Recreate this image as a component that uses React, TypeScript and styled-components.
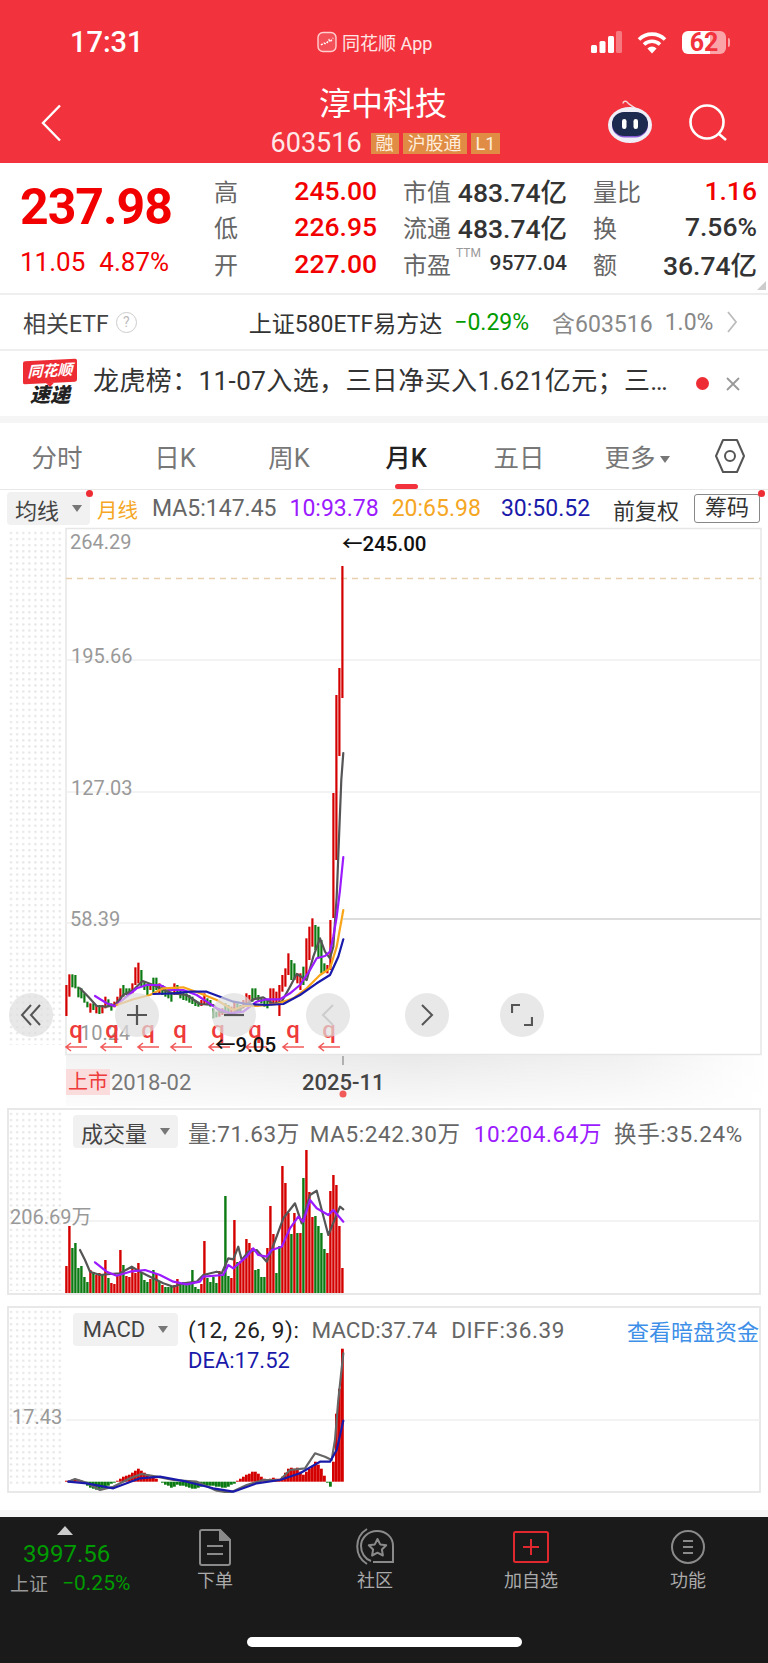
import React from 'react';
import styled, { createGlobalStyle } from 'styled-components';

const FONT = `Roboto, "Noto Sans CJK SC", sans-serif`;
const RED = '#f2323c';
const UP = '#d40000';
const DOWN = '#0c7a12';

const GlobalStyle = createGlobalStyle`
  html, body { margin: 0; padding: 0; background: #fff; }
  body { font-family: ${FONT}; width: 768px; overflow-x: hidden; }
`;

const Page = styled.div`
  width: 768px;
  height: 1663px;
  display: flex;
  flex-direction: column;
  overflow: hidden;
`;

/* 顶部红色区域 */
const Header = styled.header`
  height: 163px;
  background: ${RED};
  color: #fff;
  display: flex;
  flex-direction: column;
`;
const StatusBar = styled.div`
  height: 64px;
  padding: 20px 42px 0 70px;
  box-sizing: border-box;
  display: grid;
  grid-template-columns: 247px 1fr auto;
  align-items: center;
`;
const Clock = styled.div`
  font-size: 29px;
  font-weight: 500;
`;
const AppName = styled.div`
  display: flex;
  align-items: center;
  gap: 5px;
  font-size: 18px;
  color: #ffe6e6;
`;
const StatusIcons = styled.div`
  display: flex;
  align-items: center;
  gap: 15px;
`;
const Battery = styled.div`
  position: relative;
  width: 44px;
  height: 23px;
  border-radius: 6px;
  background: linear-gradient(90deg, #fff 0 64%, #fba4a8 64% 100%);
  color: ${RED};
  font-size: 25px;
  font-weight: 700;
  line-height: 23px;
  text-align: center;
  &::after {
    content: '';
    position: absolute;
    right: -4px;
    top: 7px;
    width: 2px;
    height: 9px;
    border-radius: 0 2px 2px 0;
    background: #fba4a8;
  }
`;
const NavRow = styled.div`
  flex: 1;
  display: grid;
  grid-template-columns: 230px 306px 232px;
  align-items: start;
`;
const BackCell = styled.div`
  padding: 40px 0 0 40px;
  display: flex;
`;
const TitleCell = styled.div`
  padding-top: 18px;
  display: flex;
  flex-direction: column;
  align-items: center;
  gap: 4px;
`;
const Title = styled.div`
  font-size: 32px;
  line-height: 44px;
`;
const CodeRow = styled.div`
  display: flex;
  align-items: center;
  gap: 4px;
  height: 26px;
  padding-left: 5px;
`;
const Code = styled.span`
  font-size: 27px;
  margin-right: 5px;
  color: #ffe8e8;
`;
const Tag = styled.span`
  background: #e08c45;
  color: #ffeedd;
  font-size: 18px;
  line-height: 21px;
  padding: 0 5px;
`;
const NavIcons = styled.div`
  display: flex;
  align-items: center;
  gap: 36px;
  padding: 36px 0 0 71px;
`;

/* 行情 */
const Quote = styled.section`
  position: relative;
  height: 132px;
  box-sizing: border-box;
  display: flex;
  padding-top: 9px;
  border-bottom: 2px solid #eee;
`;
const PriceBlock = styled.div`
  width: 214px;
  padding-left: 20px;
  box-sizing: border-box;
  color: #f20000;
`;
const Price = styled.div`
  font-size: 50px;
  font-weight: 700;
  line-height: 60px;
  margin-top: 5px;
  letter-spacing: -1px;
`;
const Change = styled.div`
  display: flex;
  gap: 14px;
  font-size: 26px;
  line-height: 30px;
  margin-top: 10px;
`;
const Stats = styled.div`
  display: grid;
  grid-template-columns: 163px 164px 164px;
  column-gap: 26px;
  grid-auto-rows: 36.5px;
`;
const Stat = styled.div`
  display: flex;
  justify-content: space-between;
  align-items: center;
`;
const StatLabel = styled.span`
  font-size: 24px;
  color: #666;
  position: relative;
`;
const Ttm = styled.sup`
  position: absolute;
  left: 53px;
  top: 1px;
  font-size: 12px;
  line-height: 12px;
  color: #999;
`;
const StatValue = styled.span<{ $red?: boolean; $small?: boolean }>`
  font-size: ${p => (p.$small ? '21px' : '26.5px')};
  font-weight: 500;
  color: ${p => (p.$red ? '#f20000' : '#333')};
`;
const Corner = styled.div`
  position: absolute;
  right: 2px;
  bottom: 3px;
  width: 0;
  height: 0;
  border-left: 9px solid transparent;
  border-bottom: 9px solid #ccc;
`;

const EtfRow = styled.div`
  height: 56px;
  box-sizing: border-box;
  border-bottom: 2px solid #eee;
  display: flex;
  align-items: center;
  padding-left: 23px;
  font-size: 23px;
  color: #444;
`;
const EtfHelp = styled.span`
  width: 19px;
  height: 19px;
  border: 1.5px solid #ccc;
  border-radius: 50%;
  color: #bbb;
  font-size: 14px;
  line-height: 19px;
  text-align: center;
  margin-left: 7px;
  margin-right: 112px;
`;
const EtfName = styled.span`
  color: #333;
  margin-right: 12px;
  white-space: nowrap;
`;
const EtfGreen = styled.span`
  color: #009b00;
  margin-right: 23px;
`;
const EtfGray = styled.span`
  color: #888;
  margin-right: 12px;
  white-space: nowrap;
`;

const NewsRow = styled.div`
  height: 65px;
  display: flex;
  align-items: center;
  padding-left: 23px;
  border-bottom: 7px solid #f5f5f5;
`;
const NewsLogo = styled.div`
  width: 54px;
  display: flex;
  flex-direction: column;
  align-items: center;
  margin-right: 16px;
`;
const NewsLogoTop = styled.div`
  position: relative;
  width: 54px;
  height: 23px;
  background: #ee2c34;
  border-radius: 2px;
  color: #fff;
  font-size: 15px;
  font-style: italic;
  font-weight: 700;
  line-height: 23px;
  text-align: center;
  white-space: nowrap;
  transform: skewY(-3deg);
  &::after {
    content: '';
    position: absolute;
    left: 23px;
    bottom: -4px;
    width: 0;
    height: 0;
    border-left: 4px solid transparent;
    border-right: 4px solid transparent;
    border-top: 4px solid #ee2c34;
  }
`;
const NewsLogoBottom = styled.div`
  font-size: 20px;
  font-weight: 900;
  font-style: italic;
  line-height: 24px;
  color: #222;
`;
const NewsText = styled.div`
  width: 585px;
  font-size: 26px;
  letter-spacing: 0.4px;
  line-height: 32px;
  margin-bottom: 5px;
  color: #333;
  white-space: nowrap;
`;
const NewsDot = styled.span`
  width: 13px;
  height: 13px;
  border-radius: 50%;
  background: #ee2c34;
  margin-left: 18px;
  margin-right: 16px;
`;

/* 周期 */
const Tabs = styled.nav`
  height: 67px;
  box-sizing: border-box;
  display: grid;
  grid-template-columns: 114px 122px 106px 128px 98px 138px 48px;
  align-items: center;
  border-bottom: 1.5px solid #e8e8e8;
`;
const Tab = styled.div<{ $active?: boolean }>`
  position: relative;
  text-align: center;
  font-size: 25.5px;
  padding-top: 4px;
  line-height: 61px;
  font-weight: ${p => (p.$active ? 500 : 400)};
  color: ${p => (p.$active ? '#222' : '#777')};
  &::after {
    content: '';
    display: ${p => (p.$active ? 'block' : 'none')};
    position: absolute;
    left: 50%;
    bottom: 0;
    width: 23px;
    height: 5px;
    margin-left: -11px;
    border-radius: 3px;
    background: ${RED};
  }
`;
const Caret = styled.span`
  display: inline-block;
  width: 0;
  height: 0;
  margin-left: 4px;
  vertical-align: middle;
  border-left: 5.5px solid transparent;
  border-right: 5.5px solid transparent;
  border-top: 7px solid #777;
`;
const HexCell = styled.div`
  display: flex;
  justify-content: center;
`;

const MaRow = styled.div`
  position: relative;
  height: 37px;
  display: flex;
  align-items: center;
  padding-left: 7px;
  font-size: 23px;
  white-space: nowrap;
`;
const Selector = styled.div<{ $w: number }>`
  width: ${p => p.$w}px;
  height: 33px;
  box-sizing: border-box;
  background: #f1f1f1;
  border-radius: 4px;
  display: flex;
  align-items: center;
  justify-content: center;
  gap: 9px;
  color: #444;
  font-size: 22px;
  letter-spacing: 0;
`;
const MaLabel = styled.span`
  margin: 0 14px 0 7px;
  font-size: 20.5px;
  color: #f5a623;
`;
const MaText = styled.span<{ $c: string; $mr: number }>`
  color: ${p => p.$c};
  margin-right: ${p => p.$mr}px;
`;
const AdjustText = styled.span`
  width: 66px;
  margin-right: 15px;
  font-size: 22px;
  color: #333;
`;
const ChipButton = styled.div`
  width: 66px;
  height: 29px;
  box-sizing: border-box;
  border: 1.5px solid #888;
  border-radius: 3px;
  font-size: 22px;
  text-align: center;
  line-height: 26px;
  color: #333;
`;
const RedDot = styled.span<{ $x: number }>`
  position: absolute;
  left: ${p => p.$x}px;
  top: 0;
  width: 7px;
  height: 7px;
  border-radius: 50%;
  background: #ee2c34;
`;

/* 主图 */
const MainChart = styled.section`
  position: relative;
  height: 581px;
`;
const ChartSvg = styled.svg`
  display: block;
  font-family: ${FONT};
`;
const ZoomBar = styled.div`
  position: absolute;
  left: 9px;
  top: 466px;
  display: grid;
  grid-template-columns: 106px 97px 94px 99px 95px 44px;
`;
const ZoomButton = styled.div`
  width: 44px;
  height: 44px;
  border-radius: 50%;
  background: rgba(222, 222, 222, 0.7);
  display: flex;
  align-items: center;
  justify-content: center;
`;

/* 副图 */
const SubPanel = styled.section<{ $h: number; $mt: number }>`
  position: relative;
  height: ${p => p.$h}px;
  margin: ${p => p.$mt}px 7px 0;
`;
const PanelHead = styled.div`
  position: absolute;
  left: 66px;
  top: 7px;
  right: 0;
  display: flex;
  align-items: center;
  font-size: 22.5px;
  letter-spacing: 0.6px;
  white-space: nowrap;
`;
const HeadText = styled.span<{ $c: string; $ml: number; $tight?: boolean }>`
  color: ${p => p.$c};
  margin-left: ${p => p.$ml}px;
  letter-spacing: ${p => (p.$tight ? '0' : 'inherit')};
`;
const DarkPoolLink = styled.span`
  margin-left: 62px;
  font-size: 22px;
  letter-spacing: 0;
  color: #3d8fe8;
`;
const DeaText = styled.div`
  position: absolute;
  left: 181px;
  top: 42px;
  font-size: 22px;
  color: #1a1aaa;
`;

/* 底栏 */
const Spacer = styled.div`
  height: 24px;
  background: linear-gradient(#fff 0 17px, #f4f4f4 17px);
`;
const Footer = styled.footer`
  position: relative;
  flex: 1;
  background: #1a1a1a;
  display: grid;
  grid-template-columns: 137px 156px 164px 148px 166px;
  align-content: start;
`;
const IndexBlock = styled.div`
  padding: 9px 0 0 10px;
  display: flex;
  flex-direction: column;
`;
const IndexUp = styled.span`
  align-self: flex-start;
  margin-left: 47px;
  width: 0;
  height: 0;
  border-left: 8px solid transparent;
  border-right: 8px solid transparent;
  border-bottom: 9px solid #ccc;
`;
const IndexValue = styled.span`
  margin: 5px 0 0 13px;
  font-size: 24px;
  line-height: 29px;
  color: #009b00;
`;
const IndexRow = styled.div`
  display: flex;
  align-items: center;
  gap: 14px;
  font-size: 19px;
  color: #999;
`;
const IndexPct = styled.span`
  font-size: 21px;
  color: #009b00;
`;
const FootItem = styled.div`
  display: flex;
  flex-direction: column;
  align-items: center;
  padding-top: 10px;
  color: #aaa;
  font-size: 18px;
  line-height: 26px;
`;
const FootIcon = styled.div`
  height: 40px;
  margin-bottom: 1px;
  display: flex;
  align-items: center;
`;
const HomeBar = styled.div`
  position: absolute;
  left: 247px;
  top: 120px;
  width: 275px;
  height: 10px;
  border-radius: 5px;
  background: #fff;
`;

// 月线数据 [最高, 最低, 是否阳线]，坐标取自放大图
type Candle = [number, number, 0 | 1];
const candles: Candle[] = [
  [315, 408, 1], [283, 350, 1], [283, 322, 0], [285, 325, 0], [320, 352, 0], [325, 355, 0], [340, 368, 0], [365, 382, 0],
  [370, 398, 1], [370, 390, 0], [375, 400, 1], [375, 402, 0], [375, 400, 1], [350, 385, 1], [358, 380, 0], [370, 392, 0],
  [365, 382, 1], [350, 378, 1], [325, 365, 1], [315, 350, 0], [325, 345, 0], [325, 345, 0], [310, 340, 1], [262, 315, 1],
  [248, 310, 1], [270, 320, 0], [305, 330, 0], [315, 345, 0], [310, 330, 1], [293, 340, 0], [293, 330, 0], [310, 340, 1],
  [315, 345, 0], [325, 350, 0], [330, 355, 0], [340, 365, 0], [310, 345, 1], [315, 345, 0], [330, 355, 0], [335, 360, 0],
  [340, 362, 0], [345, 368, 0], [350, 372, 0], [360, 378, 0], [365, 380, 0], [360, 378, 1], [340, 375, 1], [355, 375, 0],
  [360, 380, 0], [385, 415, 0], [395, 412, 0], [395, 410, 1], [385, 405, 1], [370, 395, 0], [375, 400, 0], [380, 400, 1],
  [365, 395, 1], [370, 395, 0], [375, 395, 0], [360, 385, 1], [340, 370, 1], [345, 375, 1], [325, 365, 0], [325, 360, 0],
  [345, 365, 0], [355, 370, 0], [360, 380, 0], [360, 385, 0], [325, 375, 1], [325, 370, 1], [335, 375, 1], [315, 408, 1],
  [285, 335, 1], [265, 320, 1], [220, 285, 1], [240, 300, 0], [250, 300, 0], [280, 310, 1], [280, 330, 1], [260, 315, 0],
  [175, 290, 1], [140, 240, 1], [115, 200, 1], [135, 210, 0], [140, 235, 0], [180, 280, 0], [250, 275, 0], [255, 280, 1],
  [120, 270, 1], [-261, 114, 1], [-555, -60, 1], [-636, -372, 1], [-942, -546, 1],
];

type Bar = [number, 0 | 1];
const volumes: Bar[] = [
  [27, 1], [67, 1], [45, 0], [50, 0], [25, 0], [27, 0], [16, 0], [11, 0], [23, 1], [21, 0], [18, 1], [20, 1], [18, 0], [33, 1], [15, 0], [10, 1],
  [9, 1], [17, 1], [43, 1], [28, 0], [17, 1], [16, 1], [25, 1], [20, 1], [30, 1], [20, 0], [13, 0], [11, 0], [14, 1], [23, 0], [19, 1], [11, 0],
  [8, 1], [6, 0], [6, 0], [7, 0], [8, 1], [14, 1], [9, 0], [11, 0], [10, 0], [9, 0], [23, 0], [6, 0], [4, 0], [9, 1], [52, 1], [15, 0],
  [11, 0], [16, 0], [10, 0], [22, 1], [17, 0], [97, 0], [17, 0], [15, 1], [73, 1], [31, 0], [32, 1], [35, 1], [54, 1], [50, 1], [45, 1], [23, 0],
  [24, 0], [16, 0], [16, 0], [45, 1], [87, 1], [59, 1], [20, 0], [47, 0], [127, 1], [110, 1], [80, 1], [59, 0], [80, 1], [60, 0], [60, 1], [115, 0],
  [143, 1], [101, 1], [76, 1], [77, 0], [67, 0], [60, 0], [44, 0], [40, 1], [102, 1], [118, 1], [108, 1], [67, 1], [25, 1],
];

const macd = [
  1, 1, 2, 2, 2, 1,
  -2, -4, -6, -7, -8, -8, -7, -6, -4, -2, -1,
  1, 3, 5, 6, 7, 9, 11, 13, 11, 9, 7, 5, 4, 3,
  0, -1, -3, -4, -6, -5, -3, -4, -4, -5, -6, -7, -7, -6, -5, -5, -4, -4, -4, -5, -5, -6, -6, -5, -3, -2,
  1, 3, 5, 7, 8, 10, 10, 8, 5, 3, 2, 3, 4, 3, 3, 5, 9, 13, 14, 13, 14, 10, 7, 10, 13, 15, 20, 17, 13, 6,
  -1, -5, 20, 68, 93, 133,
];

const barX = (i: number) => 66.4 + i * 3;

// 放大图坐标 -> 页面坐标
const toPoints = (pts: number[], top: number) => {
  const out: string[] = [];
  for (let i = 0; i < pts.length; i += 2) out.push(`${(pts[i] / 3).toFixed(1)},${(top + pts[i + 1] / 3).toFixed(1)}`);
  return out.join(' ');
};

const maGray = [240, 325, 265, 350, 290, 378, 320, 380, 345, 375, 370, 345, 400, 330, 428, 303, 460, 315, 490, 330, 520, 340, 560, 345, 600, 372, 640, 375, 660, 395, 700, 400, 730, 380, 760, 358, 790, 352, 820, 372, 845, 365, 870, 320, 890, 282, 920, 300, 940, 230, 960, 175, 975, 215, 990, 235, 1000, 200, 1010, 50, 1018, -150, 1024, -300, 1030, -381];
const maPurple = [285, 348, 320, 370, 345, 378, 380, 350, 410, 325, 440, 315, 480, 315, 510, 330, 550, 330, 590, 345, 620, 365, 650, 385, 690, 400, 730, 395, 770, 365, 800, 358, 840, 358, 870, 340, 900, 315, 930, 270, 950, 235, 975, 228, 990, 215, 1000, 170, 1010, 110, 1020, 30, 1030, -69];
const maOrange = [350, 375, 400, 358, 450, 345, 490, 325, 550, 322, 600, 340, 650, 360, 700, 390, 730, 378, 770, 378, 830, 372, 880, 355, 920, 325, 960, 285, 990, 265, 1010, 200, 1030, 90];
const maBlue = [460, 342, 520, 340, 570, 335, 620, 335, 660, 350, 700, 365, 740, 372, 800, 375, 850, 372, 900, 345, 950, 310, 990, 285, 1015, 230, 1030, 178];

const volGray = [240, 450, 255, 480, 270, 515, 300, 525, 330, 522, 360, 520, 395, 500, 420, 515, 450, 530, 490, 550, 520, 560, 550, 550, 590, 545, 610, 525, 650, 515, 665, 520, 685, 475, 700, 478, 715, 440, 725, 480, 745, 455, 770, 450, 800, 485, 815, 450, 850, 355, 885, 310, 905, 370, 930, 285, 950, 272, 985, 405, 1020, 320, 1030, 328];
const volPurple = [285, 487, 320, 515, 350, 527, 390, 515, 435, 510, 480, 525, 520, 545, 560, 553, 600, 545, 610, 530, 670, 525, 685, 495, 700, 505, 740, 470, 760, 445, 775, 465, 800, 470, 815, 450, 845, 440, 870, 385, 895, 350, 910, 365, 930, 300, 950, 325, 985, 345, 1000, 330, 1030, 365];

const macdGray = [205, 545, 225, 537, 260, 548, 300, 570, 340, 560, 390, 535, 425, 522, 470, 530, 520, 540, 590, 545, 650, 572, 690, 578, 740, 555, 790, 540, 840, 540, 870, 510, 915, 505, 945, 460, 975, 470, 995, 480, 1005, 420, 1015, 300, 1030, 160];
const macdBlue = [205, 545, 260, 550, 340, 565, 420, 535, 480, 530, 560, 545, 640, 565, 700, 575, 770, 550, 840, 540, 900, 520, 960, 485, 990, 485, 1010, 450, 1030, 362];

const markerX = [76, 112, 148, 180, 218, 255, 293, 329];
const arrowX = [65, 100, 137, 170, 208, 245, 282, 318];

const DotField = ({ id, y, h }: { id: string; y: number; h: number }) => (
  <>
    <defs>
      <pattern id={id} width="6.1" height="6.1" patternUnits="userSpaceOnUse" x="8" y={y}>
        <circle cx="3" cy="3" r="1.2" fill="#e6e6e6" />
      </pattern>
    </defs>
    <rect x="8" y={y} width="56" height={h} fill={`url(#${id})`} />
  </>
);

const Line = ({ pts, top, c, w = 2.2 }: { pts: number[]; top: number; c: string; w?: number }) => (
  <polyline points={toPoints(pts, top)} fill="none" stroke={c} strokeWidth={w} strokeLinejoin="round" strokeLinecap="round" />
);

export default function App() {
  return (
    <Page>
      <GlobalStyle />
      <Header>
        <StatusBar>
          <Clock>17:31</Clock>
          <AppName>
            <svg width="20" height="22" viewBox="0 0 20 22">
              <rect x="1" y="1.5" width="18" height="19" rx="5" fill="#fff" fillOpacity=".15" stroke="#ffd0d0" strokeWidth="1.4" />
              <path d="M4 14l3-2 2 1 3-4 1 2 3-4" fill="none" stroke="#fff" strokeWidth="1.5" strokeDasharray="2 1.5" />
            </svg>
            同花顺 App
          </AppName>
          <StatusIcons>
            <svg width="31" height="22" viewBox="0 0 31 22">
              <rect x="0" y="14" width="6" height="8" rx="1.5" fill="#fff" />
              <rect x="8.500" y="10" width="6" height="12" rx="1.5" fill="#fff" />
              <rect x="17" y="5" width="6" height="17" rx="1.5" fill="#fff" />
              <rect x="25" y="0" width="6" height="22" rx="1.5" fill="#fff" fillOpacity=".35" />
            </svg>
            <svg width="30" height="23" viewBox="0 0 30 23" fill="none" stroke="#fff" strokeWidth="3.6">
              <path d="M2 8.5a18.5 18.5 0 0 1 26 0" />
              <path d="M7 13.5a11.5 11.5 0 0 1 16 0" />
              <path d="M15 22.5l-4.6-5a6.5 6.5 0 0 1 9.2 0z" fill="#fff" stroke="none" />
            </svg>
            <Battery>62</Battery>
          </StatusIcons>
        </StatusBar>
        <NavRow>
          <BackCell>
            <svg width="22" height="38" viewBox="0 0 22 38" fill="none" stroke="#fff" strokeWidth="2.4">
              <path d="M20 1.5L3 19l17 17.5" />
            </svg>
          </BackCell>
          <TitleCell>
            <Title>淳中科技</Title>
            <CodeRow>
              <Code>603516</Code>
              <Tag>融</Tag>
              <Tag>沪股通</Tag>
              <Tag>L1</Tag>
            </CodeRow>
          </TitleCell>
          <NavIcons>
            <svg width="46" height="44" viewBox="0 0 46 44">
              <path d="M16 3.500c0-2.500 3.500-3 4.500-1 .8 1.600 4 3 8 6" fill="none" stroke="#f6d5d9" strokeWidth="1.500" />
              <ellipse cx="23" cy="25" rx="22" ry="18" fill="#f0eff8" />
              <rect x="5" y="12.500" width="36" height="25" rx="12.500" fill="#8a5bd6" />
              <rect x="5" y="12" width="36" height="24" rx="12" fill="#1d2a4f" />
              <rect x="15" y="19" width="4.500" height="10" rx="2.200" fill="#fff" />
              <rect x="26.500" y="19" width="4.500" height="10" rx="2.200" fill="#fff" />
            </svg>
            <svg width="39" height="37" viewBox="0 0 39 37" fill="none" stroke="#fff" strokeWidth="2.6">
              <circle cx="18" cy="18" r="16.500" />
              <path d="M30 30l7 6" />
            </svg>
          </NavIcons>
        </NavRow>
      </Header>

      <Quote>
        <PriceBlock>
          <Price>237.98</Price>
          <Change>
            <span>11.05</span>
            <span>4.87%</span>
          </Change>
        </PriceBlock>
        <Stats>
          <Stat><StatLabel>高</StatLabel><StatValue $red>245.00</StatValue></Stat>
          <Stat><StatLabel>市值</StatLabel><StatValue>483.74亿</StatValue></Stat>
          <Stat><StatLabel>量比</StatLabel><StatValue $red>1.16</StatValue></Stat>
          <Stat><StatLabel>低</StatLabel><StatValue $red>226.95</StatValue></Stat>
          <Stat><StatLabel>流通</StatLabel><StatValue>483.74亿</StatValue></Stat>
          <Stat><StatLabel>换</StatLabel><StatValue>7.56%</StatValue></Stat>
          <Stat><StatLabel>开</StatLabel><StatValue $red>227.00</StatValue></Stat>
          <Stat><StatLabel>市盈<Ttm>TTM</Ttm></StatLabel><StatValue $small>9577.04</StatValue></Stat>
          <Stat><StatLabel>额</StatLabel><StatValue>36.74亿</StatValue></Stat>
        </Stats>
        <Corner />
      </Quote>

      <EtfRow>
        相关ETF
        <EtfHelp>?</EtfHelp>
        <EtfName>上证580ETF易方达</EtfName>
        <EtfGreen>−0.29%</EtfGreen>
        <EtfGray>含603516</EtfGray>
        <EtfGray>1.0%</EtfGray>
        <svg width="14" height="24" viewBox="0 0 14 24" fill="none" stroke="#bbb" strokeWidth="1.8">
          <path d="M3 2l8 10-8 10" />
        </svg>
      </EtfRow>

      <NewsRow>
        <NewsLogo>
          <NewsLogoTop>同花顺</NewsLogoTop>
          <NewsLogoBottom>速递</NewsLogoBottom>
        </NewsLogo>
        <NewsText>龙虎榜：11-07入选，三日净买入1.621亿元；三…</NewsText>
        <NewsDot />
        <svg width="16" height="16" viewBox="0 0 16 16" stroke="#999" strokeWidth="1.8">
          <path d="M2 2l12 12M14 2L2 14" />
        </svg>
      </NewsRow>

      <Tabs>
        <Tab>分时</Tab>
        <Tab>日K</Tab>
        <Tab>周K</Tab>
        <Tab $active>月K</Tab>
        <Tab>五日</Tab>
        <Tab>更多<Caret /></Tab>
        <HexCell>
          <svg width="32" height="36" viewBox="0 0 32 36" fill="none" stroke="#555" strokeWidth="2">
            <path d="M9 2h14l7 16-7 16H9L2 18z" strokeLinejoin="round" />
            <circle cx="16" cy="18" r="5" />
          </svg>
        </HexCell>
      </Tabs>

      <MaRow>
        <Selector $w={83}>均线<Caret /></Selector>
        <RedDot $x={86} />
        <MaLabel>月线</MaLabel>
        <MaText $c="#666" $mr={13}>MA5:147.45</MaText>
        <MaText $c="#9b1aff" $mr={13}>10:93.78</MaText>
        <MaText $c="#f5a623" $mr={20}>20:65.98</MaText>
        <MaText $c="#1a1aaa" $mr={23}>30:50.52</MaText>
        <AdjustText>前复权</AdjustText>
        <ChipButton>筹码</ChipButton>
        <RedDot $x={758} />
      </MaRow>

      <MainChart>
        <ChartSvg width="768" height="581" viewBox="0 527 768 581">
          <defs>
            <linearGradient id="dateShade" x1="0" x2="1" y1="0" y2="0">
              <stop offset="0" stopColor="#f3f3f3" />
              <stop offset="0.5" stopColor="#e9e9e9" />
              <stop offset="0.8" stopColor="#f1f1f1" />
              <stop offset="1" stopColor="#ffffff" />
            </linearGradient>
            <linearGradient id="dateFade" x1="0" x2="0" y1="0" y2="1">
              <stop offset="0" stopColor="#ffffff" stopOpacity="0" />
              <stop offset="1" stopColor="#ffffff" stopOpacity="0.75" />
            </linearGradient>
          </defs>
          <DotField id="mainDots" y={530} h={515} />
          <rect x="66" y="1055" width="702" height="51" fill="url(#dateShade)" />
          <rect x="66" y="1055" width="702" height="51" fill="url(#dateFade)" />
          <rect x="66" y="528.5" width="695" height="526" fill="#fff" stroke="#e6e6e6" strokeWidth="1.5" />
          <line x1="66" x2="761" y1="660" y2="660" stroke="#efefef" strokeWidth="1.5" />
          <line x1="66" x2="761" y1="792" y2="792" stroke="#efefef" strokeWidth="1.5" />
          <line x1="66" x2="343" y1="923" y2="923" stroke="#efefef" strokeWidth="1.5" />
          <line x1="343" x2="761" y1="919" y2="919" stroke="#ddd" strokeWidth="2" />
          <line x1="66" x2="761" y1="578.5" y2="578.5" stroke="#e8cfae" strokeWidth="1.5" strokeDasharray="6 5" />

          <g fontSize="20" fill="#999" dominantBaseline="central">
            <text x="70" y="542">264.29</text>
            <text x="71" y="656">195.66</text>
            <text x="71" y="788">127.03</text>
            <text x="70" y="919">58.39</text>
            <text x="80" y="1033">10.24</text>
          </g>

          {candles.map(([hi, lo, up], i) => (
            <rect
              key={i}
              x={barX(i) - 1.1}
              y={880 + hi / 3}
              width="2.2"
              height={(lo - hi) / 3}
              fill={up ? UP : DOWN}
            />
          ))}
          <Line pts={maGray} top={880} c="#555" />
          <Line pts={maPurple} top={880} c="#9b1aff" />
          <Line pts={maOrange} top={880} c="#f9a51a" />
          <Line pts={maBlue} top={880} c="#1a1aaa" />

          <text x="342" y="544" fontSize="20.5" fontWeight="500" fill="#111" dominantBaseline="central">←245.00</text>

          <g fontSize="24" fill="#ee3a3a" fontWeight="500" textAnchor="middle" dominantBaseline="central">
            {markerX.map(x => <text key={x} x={x} y="1030">q</text>)}
          </g>
          <g stroke="#f25a5a" strokeWidth="1.6" fill="none">
            {arrowX.map(x => <path key={x} d={`M${x + 22} 1047H${x + 1}M${x + 6} 1043l-5 4 5 4`} />)}
          </g>
          <text x="215" y="1045" fontSize="20.5" fontWeight="500" fill="#111" dominantBaseline="central">←9.05</text>

          <rect x="66" y="1069" width="44" height="26" fill="#fbdcdc" />
          <text x="88" y="1082" fontSize="20" fill="#ee3a3a" textAnchor="middle" dominantBaseline="central">上市</text>
          <text x="111" y="1082" fontSize="22" fill="#777" dominantBaseline="central">2018-02</text>
          <line x1="343" x2="343" y1="1056" y2="1065" stroke="#888" strokeWidth="1.2" />
          <text x="302" y="1082" fontSize="22" fontWeight="500" fill="#444" dominantBaseline="central">2025-11</text>
          <circle cx="343" cy="1094" r="3.5" fill="#f25a5a" />
        </ChartSvg>
        <ZoomBar>
          <ZoomButton>
            <svg width="22" height="22" viewBox="0 0 22 22" fill="none" stroke="#555" strokeWidth="2">
              <path d="M11 1L2 11l9 10M20 1l-9 10 9 10" />
            </svg>
          </ZoomButton>
          <ZoomButton>
            <svg width="22" height="22" viewBox="0 0 22 22" stroke="#555" strokeWidth="2.2">
              <path d="M1 11h20M11 1v20" />
            </svg>
          </ZoomButton>
          <ZoomButton>
            <svg width="22" height="4" viewBox="0 0 22 4" stroke="#555" strokeWidth="2.2">
              <path d="M1 2h20" />
            </svg>
          </ZoomButton>
          <ZoomButton>
            <svg width="14" height="24" viewBox="0 0 14 24" fill="none" stroke="#ccc" strokeWidth="2">
              <path d="M12 2L2 12l10 10" />
            </svg>
          </ZoomButton>
          <ZoomButton>
            <svg width="14" height="24" viewBox="0 0 14 24" fill="none" stroke="#555" strokeWidth="2">
              <path d="M2 2l10 10L2 22" />
            </svg>
          </ZoomButton>
          <ZoomButton>
            <svg width="22" height="22" viewBox="0 0 22 22" fill="none" stroke="#555" strokeWidth="2.2">
              <path d="M1 9V1h8M21 13v8h-8" />
            </svg>
          </ZoomButton>
        </ZoomBar>
      </MainChart>

      <SubPanel $h={187} $mt={0}>
        <ChartSvg width="754" height="187" viewBox="7 1108 754 187">
          <rect x="8" y="1109" width="752" height="185" fill="#fff" stroke="#e6e6e6" strokeWidth="1.8" />
          <DotField id="volDots" y={1111} h={180} />
          <line x1="66" x2="760" y1="1221" y2="1221" stroke="#efefef" strokeWidth="1.5" />
          <text x="10" y="1217" fontSize="20" fill="#999" dominantBaseline="central">206.69万</text>
          {volumes.map(([h, up], i) => (
            <rect key={i} x={barX(i) - 1.2} y={1293 - h} width="2.4" height={h} fill={up ? UP : DOWN} />
          ))}
          <Line pts={volGray} top={1100} c="#555" />
          <Line pts={volPurple} top={1100} c="#9b1aff" />
        </ChartSvg>
        <PanelHead>
          <Selector $w={105}>成交量<Caret /></Selector>
          <HeadText $c="#666" $ml={10}>量:71.63万</HeadText>
          <HeadText $c="#666" $ml={10}>MA5:242.30万</HeadText>
          <HeadText $c="#9b1aff" $ml={13}>10:204.64万</HeadText>
          <HeadText $c="#666" $ml={12}>换手:35.24%</HeadText>
        </PanelHead>
      </SubPanel>

      <SubPanel $h={187} $mt={11}>
        <ChartSvg width="754" height="187" viewBox="7 1306 754 187">
          <rect x="8" y="1307" width="752" height="185" fill="#fff" stroke="#e6e6e6" strokeWidth="1.8" />
          <DotField id="macdDots" y={1309} h={176} />
          <line x1="66" x2="760" y1="1420" y2="1420" stroke="#efefef" strokeWidth="1.5" />
          <text x="12" y="1417" fontSize="20" fill="#999" dominantBaseline="central">17.43</text>
          {macd.map((v, i) => (
            <rect
              key={i}
              x={barX(i) - 1.4}
              y={v > 0 ? 1481.7 - v : 1481.7}
              width="2.8"
              height={Math.abs(v)}
              fill={v > 0 ? UP : DOWN}
            />
          ))}
          <Line pts={macdGray} top={1300} c="#666" />
          <Line pts={macdBlue} top={1300} c="#1a1aaa" />
        </ChartSvg>
        <PanelHead>
          <Selector $w={105}>MACD<Caret /></Selector>
          <HeadText $c="#222" $ml={10}>(12, 26, 9):</HeadText>
          <HeadText $c="#666" $ml={12} $tight>MACD:37.74</HeadText>
          <HeadText $c="#666" $ml={14}>DIFF:36.39</HeadText>
          <DarkPoolLink>查看暗盘资金</DarkPoolLink>
        </PanelHead>
        <DeaText>DEA:17.52</DeaText>
      </SubPanel>

      <Spacer />

      <Footer>
        <IndexBlock>
          <IndexUp />
          <IndexValue>3997.56</IndexValue>
          <IndexRow>
            上证
            <IndexPct>−0.25%</IndexPct>
          </IndexRow>
        </IndexBlock>
        <FootItem>
          <FootIcon>
            <svg width="32" height="37" viewBox="0 0 32 37" fill="none" stroke="#8a8a8a" strokeWidth="2">
              <path d="M3 1h18l10 10v23a2 2 0 0 1-2 2H3a2 2 0 0 1-2-2V3a2 2 0 0 1 2-2z" />
              <path d="M21 1l10 10H21z" fill="#8a8a8a" />
              <path d="M8 17h16M8 25h16" />
            </svg>
          </FootIcon>
          下单
        </FootItem>
        <FootItem>
          <FootIcon>
            <svg width="38" height="38" viewBox="0 0 38 38" fill="none" stroke="#8a8a8a" strokeWidth="2">
              <path d="M11 1C-2 9-2 28 11 36" />
              <path d="M17 34H37V18C37 9 30 3 21 3C12 3 5 10 5 18C5 25 9 31 15 33" />
              <path d="M21.500 11l2.700 5.400 6 .9-4.300 4.200 1 6-5.400-2.800-5.400 2.800 1-6-4.300-4.200 6-.9z" strokeLinejoin="round" />
            </svg>
          </FootIcon>
          社区
        </FootItem>
        <FootItem>
          <FootIcon>
            <svg width="36" height="32" viewBox="0 0 36 32" fill="none" stroke="#e0282e" strokeWidth="2">
              <rect x="1" y="1" width="34" height="30" rx="1.5" />
              <path d="M18 8v16M10 16h16" />
            </svg>
          </FootIcon>
          加自选
        </FootItem>
        <FootItem>
          <FootIcon>
            <svg width="34" height="34" viewBox="0 0 34 34" fill="none" stroke="#8a8a8a" strokeWidth="2">
              <circle cx="17" cy="17" r="16" />
              <path d="M12 11h10M12 17h10M12 23h10" />
            </svg>
          </FootIcon>
          功能
        </FootItem>
        <HomeBar />
      </Footer>
    </Page>
  );
}
